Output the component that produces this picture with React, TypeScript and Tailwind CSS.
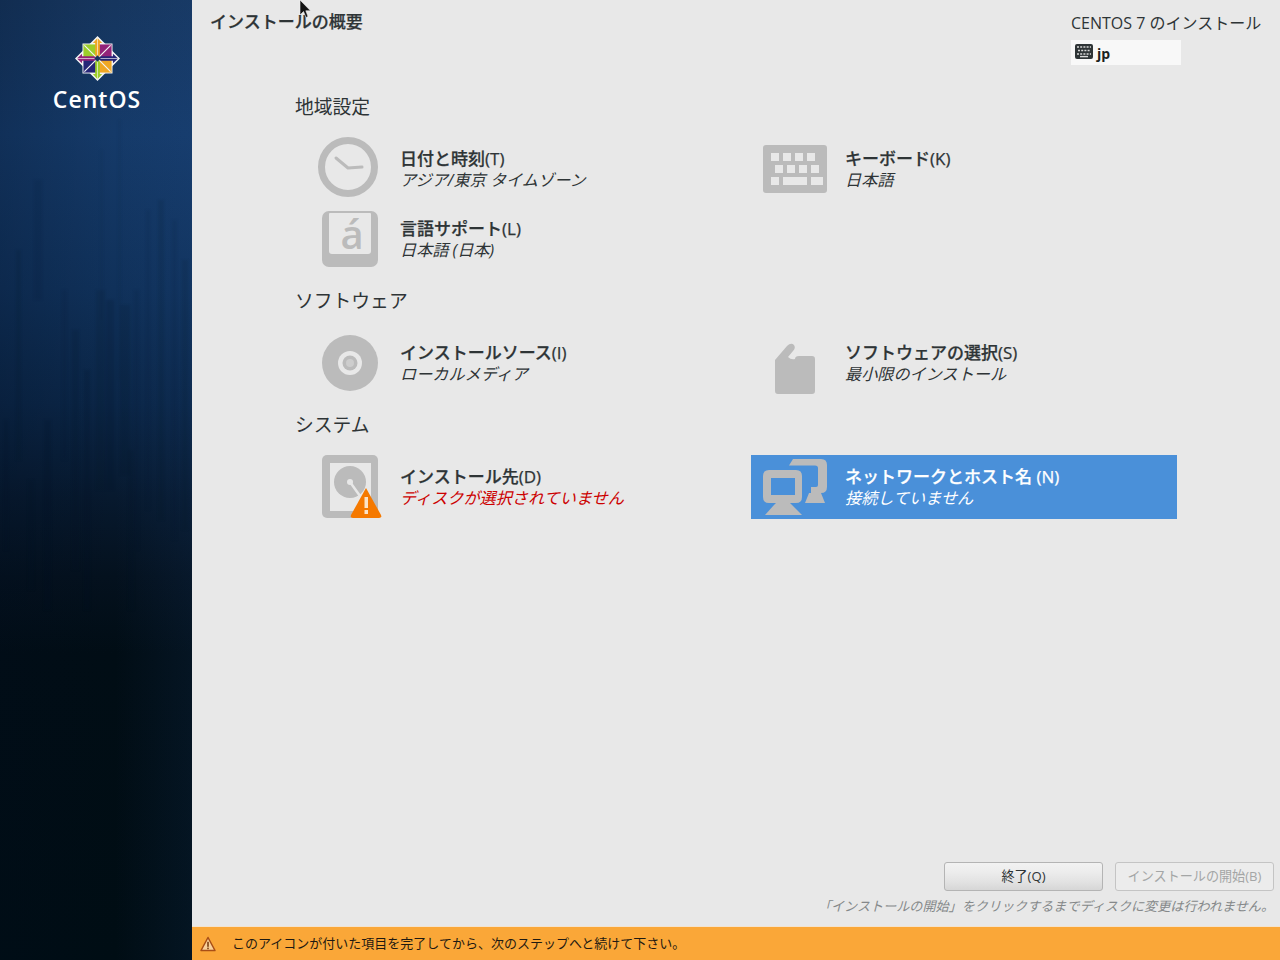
const sans = "font-['Open_Sans','Noto_Sans_CJK_JP',sans-serif]";

// dark vertical streaks in the sidebar artwork: [x, y, width, height, opacity]
const streaks = [
  [34, 180, 8, 120, 0.08], [16, 250, 5, 210, 0.1], [62, 290, 5, 170, 0.08], [72, 330, 7, 240, 0.12],
  [96, 290, 9, 200, 0.1], [106, 300, 8, 190, 0.14], [120, 305, 10, 170, 0.12], [134, 290, 5, 260, 0.08],
  [146, 210, 4, 300, 0.08], [158, 200, 6, 320, 0.1], [172, 220, 5, 320, 0.08], [182, 260, 6, 270, 0.1],
  [84, 370, 6, 240, 0.14], [44, 420, 7, 190, 0.14], [4, 420, 4, 130, 0.14], [118, 120, 3, 260, 0.05],
  [100, 150, 3, 170, 0.05], [128, 450, 6, 160, 0.12], [28, 480, 6, 110, 0.12],
];

function Logo() {
  return (
    <svg viewBox="0 0 48 48" className="w-[45px] h-[45px]">
      <path d="M24 0 L36 12 H12 Z M12 12 L24 24 L12 36 L0 24 Z" fill="#f4f4f4" />
      <path d="M36 12 L48 24 L36 36 L24 48 L12 36 H36 Z" fill="#f4f4f4" />
      <rect x="8" y="8" width="32" height="32" fill="#f4f4f4" />
      <rect x="9" y="9" width="13.5" height="13.5" fill="#9ccd2a" />
      <rect x="25.5" y="9" width="13.5" height="13.5" fill="#932279" />
      <rect x="25.5" y="25.5" width="13.5" height="13.5" fill="#efa724" />
      <rect x="9" y="25.5" width="13.5" height="13.5" fill="#262577" />
      <path d="M21.5 22 V7.5 H19 L24 2 L29 7.5 H26.5 V22 Z" fill="#efa724" />
      <path d="M26 21.5 H40.5 V19 L46 24 L40.5 29 V26.5 H26 Z" fill="#262577" />
      <path d="M26.5 26 V40.5 H29 L24 46 L19 40.5 H21.5 V26 Z" fill="#9ccd2a" />
      <path d="M22 26.5 H7.5 V29 L2 24 L7.5 19 V21.5 H22 Z" fill="#932279" />
      <path d="M10 10 L22 22 M38 10 L26 22 M38 38 L26 26 M10 38 L22 26" stroke="#f4f4f4" strokeWidth="1.3" />
      <path d="M24 1 V23 M47 24 H25 M24 47 V25 M1 24 H23" stroke="#f4f4f4" strokeWidth="0.7" />
      <rect x="21.6" y="21.6" width="4.8" height="4.8" transform="rotate(45 24 24)" fill="#16345e" />
    </svg>
  );
}

function ClockIcon() {
  return (
    <svg viewBox="0 0 64 64" className="w-16 h-16 overflow-visible">
      <circle cx="30" cy="30" r="26.5" fill="none" stroke="#bbbbbb" strokeWidth="7" />
      <path d="M18 21 L30 31 L44 30" fill="none" stroke="#bbbbbb" strokeWidth="3" strokeLinecap="round" strokeLinejoin="round" />
    </svg>
  );
}

function LanguageIcon() {
  return (
    <svg viewBox="0 0 64 64" className="w-16 h-16">
      <rect x="4" y="4" width="56" height="56" rx="7" fill="#bbbbbb" />
      <path d="M12 6 H52 Q53 6 53 7 V44 Q53 47 50 47 H14 Q11 47 11 44 V7 Q11 6 12 6 Z" fill="#e8e8e8" />
      <text x="34" y="42" textAnchor="middle" fontSize="40" fontWeight="600" fontFamily="Open Sans" fill="#bbbbbb">á</text>
    </svg>
  );
}

function KeyboardIcon() {
  const keys = [
    [8, 16, 8], [20, 16, 8], [32, 16, 8], [44, 16, 8],
    [12, 28, 8], [24, 28, 8], [36, 28, 8], [48, 28, 8],
    [8, 40, 8], [20, 40, 24], [48, 40, 12],
  ];
  return (
    <svg viewBox="0 0 64 64" className="w-16 h-16">
      <rect x="0" y="8" width="64" height="48" rx="3" fill="#bbbbbb" />
      {keys.map(([x, y, w]) => (
        <rect key={`${x}-${y}`} x={x} y={y} width={w} height="8" fill="#e8e8e8" />
      ))}
    </svg>
  );
}

function DiscIcon() {
  return (
    <svg viewBox="0 0 64 64" className="w-16 h-16">
      <circle cx="32" cy="32" r="28" fill="#bbbbbb" />
      <circle cx="32" cy="32" r="12" fill="#e8e8e8" />
      <circle cx="32" cy="32" r="7.5" fill="#bbbbbb" />
      <circle cx="32" cy="32" r="4" fill="#cdcdcd" />
    </svg>
  );
}

function SoftwareIcon() {
  return (
    <svg viewBox="0 0 64 64" className="w-16 h-16">
      <path
        d="M12 29 L24 15 Q28 11 31 14 Q33 17 30 20 L25 26 Q28 29 32 28 Q32 25 36 25 H49 Q52 25 52 28 V60 Q52 63 49 63 H15 Q12 63 12 60 Z"
        fill="#bbbbbb"
      />
    </svg>
  );
}

function DiskIcon() {
  return (
    <svg viewBox="0 0 64 64" className="w-16 h-16 overflow-visible">
      <rect x="4" y="0" width="56" height="63" rx="5" fill="#bbbbbb" />
      <rect x="12" y="8" width="41" height="48" fill="#e8e8e8" />
      <circle cx="32" cy="27" r="16" fill="#bbbbbb" />
      <circle cx="32" cy="27" r="3" fill="#e8e8e8" />
      <path d="M32 27 L42 41" stroke="#e8e8e8" strokeWidth="2.5" />
      <path d="M48 33 L63 60 Q64 63 61 63 H35 Q32 63 33 60 Z" fill="#f57900" />
      <rect x="46.5" y="42" width="3.5" height="11" fill="#fbe3c8" />
      <rect x="46.5" y="55" width="3.5" height="4" fill="#fbe3c8" />
    </svg>
  );
}

function NetworkIcon() {
  return (
    <svg viewBox="0 0 64 64" className="w-16 h-16">
      <path d="M30 4 H58 Q64 4 64 10 V32 Q64 38 58 38 H48 V32 H53 Q55 32 55 30 V13 Q55 10.5 52 10.5 H26 Z" fill="#bbbbbb" />
      <path d="M46 38 H58 L62 48 H42 Z" fill="#bbbbbb" />
      <path fillRule="evenodd" d="M6 15 H33 Q39 15 39 21 V42 Q39 48 33 48 H6 Q0 48 0 42 V21 Q0 15 6 15 Z M8 23 V40 H32 V23 Z" fill="#bbbbbb" />
      <path d="M13 48 H27 L29 50 L39 60 H2 L11 50 Z" fill="#bbbbbb" />
    </svg>
  );
}

function Spoke({ icon, title, sub, status, active }: { icon: React.ReactNode; title: string; sub: string; status?: boolean; active?: boolean }) {
  return (
    <div className={`flex items-center h-16 ${active ? "bg-[#4a90d9]" : ""}`}>
      <div className="w-16 h-16 ml-3 mr-[18px] shrink-0">{icon}</div>
      <div>
        <div className={`text-[17px] leading-[22px] font-medium [-webkit-text-stroke:0.25px] ${active ? "text-white" : "text-[#2e3436]"}`}>{title}</div>
        <div className={`text-[16.15px] leading-[21px] italic ${status ? "text-[#cc0000]" : active ? "text-white" : "text-[#2e3436]"}`}>{sub}</div>
      </div>
    </div>
  );
}

function Heading({ children }: { children: string }) {
  return <h2 className="text-[18.8px] leading-[22px] text-[#2e3436] ml-[103px] mb-[19px]">{children}</h2>;
}

export default function App() {
  return (
    <div className={`flex w-[1280px] h-[960px] overflow-hidden relative ${sans}`}>
      <aside className="relative w-[192px] shrink-0 flex flex-col items-center pt-[36px] overflow-hidden bg-[linear-gradient(180deg,#16365f_0%,#153a69_14%,#10315a_30%,#0b2647_42%,#07192e_52%,#04111e_60%,#010d15_68%,#000d14_100%)]">
        <div className="absolute inset-0 bg-[linear-gradient(90deg,rgba(0,12,30,0.22)_0%,rgba(0,0,0,0)_60%,rgba(40,90,160,0.1)_100%)]" />
        <svg className="absolute inset-0 w-[192px] h-[960px] blur-[1px]" viewBox="0 0 192 960">
          {streaks.map(([x, y, w, h, o]) => (
            <rect key={`${x}-${y}`} x={x} y={y} width={w} height={h} fill="#020f20" opacity={o} />
          ))}
        </svg>
        <div className="relative pl-[2px]"><Logo /></div>
        <div className="relative mt-[5px] pl-[2px] text-white text-[23px] leading-[26px] font-semibold tracking-[1px]">CentOS</div>
      </aside>

      <main className="flex-1 flex flex-col bg-[#e8e8e8]">
        <header className="flex justify-between h-[96px] pl-[18px] pr-[18px] pt-[10px] shrink-0">
          <div className="text-[17px] leading-[24px] font-medium [-webkit-text-stroke:0.25px] text-[#2e3436]">インストールの概要</div>
          <div className="w-[191px]">
            <div className="text-[16px] leading-[26px] whitespace-nowrap text-[#2e3436]">CENTOS 7 のインストール</div>
            <div className="flex items-center w-[110px] h-[25px] mt-[4px] bg-[#f8f8f8] pl-1 gap-1">
              <svg viewBox="0 0 18 16" className="w-[18px] h-4 mb-[2px]">
                <rect width="18" height="15" rx="2" fill="#2e3436" />
                <path d="M2 3 H16 M3 6.5 H15 M2 10 H16" stroke="#d8d8d8" strokeWidth="1.6" strokeDasharray="2 1.2" />
                <path d="M5 12.6 H13" stroke="#d8d8d8" strokeWidth="1.4" />
              </svg>
              <span className="text-[14px] font-bold text-[#1c1f20] mt-[2px]">jp</span>
            </div>
          </div>
        </header>

        <div className="flex-1">
          <Heading>地域設定</Heading>
          <div className="grid grid-cols-[426px_426px] gap-x-[19px] gap-y-[6px] ml-[114px] mb-[19px]">
            <Spoke icon={<ClockIcon />} title="日付と時刻(T)" sub="アジア/東京 タイムゾーン" />
            <Spoke icon={<KeyboardIcon />} title="キーボード(K)" sub="日本語" />
            <Spoke icon={<LanguageIcon />} title="言語サポート(L)" sub="日本語 (日本)" />
          </div>
          <Heading>ソフトウェア</Heading>
          <div className="grid grid-cols-[426px_426px] gap-x-[19px] ml-[114px] mb-[19px]">
            <Spoke icon={<DiscIcon />} title="インストールソース(I)" sub="ローカルメディア" />
            <Spoke icon={<SoftwareIcon />} title="ソフトウェアの選択(S)" sub="最小限のインストール" />
          </div>
          <Heading>システム</Heading>
          <div className="grid grid-cols-[426px_426px] gap-x-[19px] ml-[114px]">
            <Spoke icon={<DiskIcon />} title="インストール先(D)" sub="ディスクが選択されていません" status />
            <Spoke icon={<NetworkIcon />} title="ネットワークとホスト名 (N)" sub="接続していません" active />
          </div>
        </div>

        <div className="flex justify-end gap-3 pr-[6px]">
          <button className="w-[159px] h-[29px] rounded-[3px] border border-[#b4b4b4] text-[13.1px] text-[#2e3436] bg-[linear-gradient(180deg,#f2f2f2_0%,#ececec_35%,#e2e2e2_70%,#d6d6d6_100%)]">終了(Q)</button>
          <button className="w-[159px] h-[29px] rounded-[3px] border border-[#c4c4c4] text-[13.1px] text-[#a4a6a6] bg-[#ececec]">インストールの開始(B)</button>
        </div>
        <div className="text-right pr-[6px] mt-[5px] mb-[10px] text-[13.1px] leading-[20px] italic text-[#85888a]">「インストールの開始」をクリックするまでディスクに変更は行われません。</div>
        <div className="flex items-center h-[34px] border-t border-t-[#f3e3cf] bg-[#faa738] pl-2 shrink-0">
          <svg viewBox="0 0 16 16" className="w-4 h-4 shrink-0">
            <path d="M8 1.5 L15 14.5 H1 Z" fill="#f8d09a" stroke="#a84e16" strokeWidth="1.5" strokeLinejoin="round" />
            <rect x="7.2" y="5.8" width="1.6" height="5" fill="#7a4014" />
            <rect x="7.2" y="11.6" width="1.6" height="1.6" fill="#7a4014" />
          </svg>
          <span className="ml-4 text-[13px] text-[#1f1a12]">このアイコンが付いた項目を完了してから、次のステップへと続けて下さい。</span>
        </div>
      </main>

      <svg viewBox="0 0 12 19" className="absolute left-[299px] top-0 w-3 h-[19px]">
        <path d="M1 0 L1 15 L4.5 11.5 L7 17.5 L9 16.5 L6.8 10.8 L11.5 10.8 Z" fill="#111111" stroke="#eeeeee" strokeWidth="0.6" />
      </svg>
    </div>
  );
}
